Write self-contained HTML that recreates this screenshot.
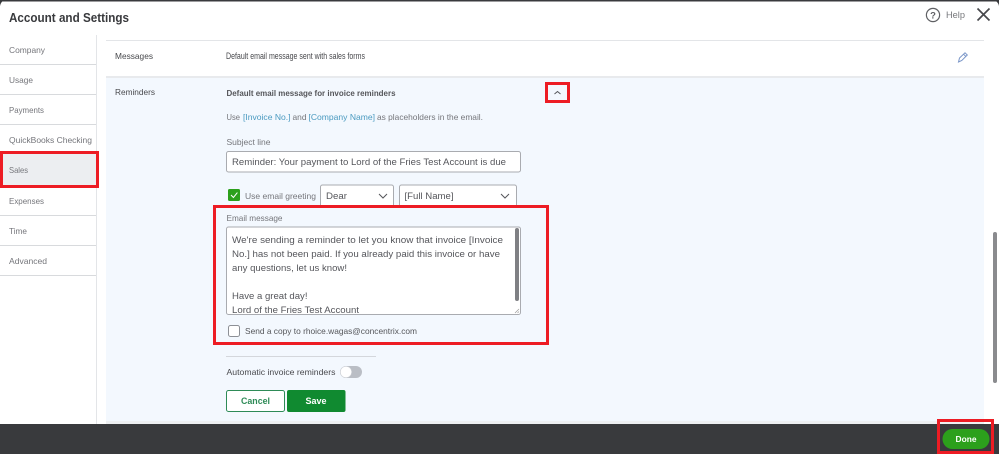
<!DOCTYPE html>
<html><head><meta charset="utf-8"><style>
html,body{margin:0;padding:0;background:#fff;width:999px;height:454px;overflow:hidden}
svg{display:block;filter:blur(.35px)}
text{font-family:"Liberation Sans",sans-serif;font-size:8.4px;fill:#75767b}
.d{fill:#48494d}
.l{fill:#4a9ac0}
.m{font-size:9.6px;fill:#55565b}
</style></head><body>
<svg width="999" height="454" viewBox="0 0 999 454" xmlns="http://www.w3.org/2000/svg">
<rect width="999" height="454" fill="#fff"/>
<rect width="999" height="1.5" fill="#393a3d"/>
<path d="M0 0H5Q1 1 0 6Z" fill="#393a3d"/>
<path d="M999 0H993Q998 1 999 6Z" fill="#393a3d"/>
<text x="9" y="22" textLength="120" lengthAdjust="spacingAndGlyphs" style="font-size:12.5px;font-weight:bold;fill:#393a3d">Account and Settings</text>

<!-- sidebar -->
<rect x="96" y="35" width="1" height="389" fill="#e3e5e8"/>
<rect x="0" y="152" width="96" height="34" fill="#eceef1"/>
<g fill="#d8dadd">
<rect y="64" width="96" height="1"/><rect y="94" width="96" height="1"/><rect y="124" width="96" height="1"/><rect y="215" width="96" height="1"/><rect y="245" width="96" height="1"/><rect y="275" width="96" height="1"/>
</g>
<text x="9" y="53" textLength="36" lengthAdjust="spacingAndGlyphs">Company</text>
<text x="9" y="83" textLength="24" lengthAdjust="spacingAndGlyphs">Usage</text>
<text x="9" y="113" textLength="35" lengthAdjust="spacingAndGlyphs">Payments</text>
<text x="9" y="143" textLength="83" lengthAdjust="spacingAndGlyphs">QuickBooks Checking</text>
<text x="9" y="173" textLength="19" lengthAdjust="spacingAndGlyphs">Sales</text>
<text x="9" y="204" textLength="35" lengthAdjust="spacingAndGlyphs">Expenses</text>
<text x="9" y="234" textLength="18" lengthAdjust="spacingAndGlyphs">Time</text>
<text x="9" y="264" textLength="38" lengthAdjust="spacingAndGlyphs">Advanced</text>

<!-- content -->
<rect x="106" y="40" width="878" height="1" fill="#e3e5e8"/>
<rect x="106" y="76" width="878" height="2" fill="#e8eaed"/>
<rect x="106" y="78" width="878" height="343" fill="#f3f8fe"/>
<rect x="106" y="421" width="878" height="3" fill="#eef0f2"/>
<text x="115" y="59" textLength="38" lengthAdjust="spacingAndGlyphs" class="d">Messages</text>
<text x="226" y="59" textLength="139" lengthAdjust="spacingAndGlyphs" style="font-size:8.8px" class="d">Default email message sent with sales forms</text>
<text x="115" y="95" textLength="40" lengthAdjust="spacingAndGlyphs" class="d">Reminders</text>
<text x="226.5" y="96" textLength="169" lengthAdjust="spacingAndGlyphs" style="font-weight:bold;fill:#55565a">Default email message for invoice reminders</text>
<text x="226.5" y="120" textLength="13.5" lengthAdjust="spacingAndGlyphs">Use</text>
<text x="243" y="120" textLength="47.5" lengthAdjust="spacingAndGlyphs" class="l">[Invoice No.]</text>
<text x="292.5" y="120" textLength="14" lengthAdjust="spacingAndGlyphs">and</text>
<text x="308.5" y="120" textLength="66.5" lengthAdjust="spacingAndGlyphs" class="l">[Company Name]</text>
<text x="377" y="120" textLength="106" lengthAdjust="spacingAndGlyphs">as placeholders in the email.</text>
<!-- pencil -->
<g fill="none" stroke="#7a96c8" stroke-width="1"><path d="M958.5 62L959.5 58L965 52.8L967.3 55L961.8 60.5Z"/><path d="M963.6 54.3L965.8 56.4"/></g>
<!-- help -->
<circle cx="933" cy="15" r="6.6" fill="none" stroke="#5f6064" stroke-width="1.2"/>
<text x="933" y="18.5" text-anchor="middle" style="font-size:9.5px;font-weight:bold;fill:#5f6064">?</text>
<text x="946" y="18" textLength="19" lengthAdjust="spacingAndGlyphs" style="font-size:9.5px;fill:#77787c">Help</text>
<path d="M977.5 8.5L989.5 20.5M989.5 8.5L977.5 20.5" stroke="#47484c" stroke-width="1.7" fill="none"/>

<!-- chevron -->
<path d="M554.5 94L557.5 91.5L560.5 94" fill="none" stroke="#55565a" stroke-width="1"/>
<rect x="546.5" y="83.5" width="22" height="18" fill="none" stroke="#ed1c24" stroke-width="3"/>

<!-- subject -->
<text x="226.5" y="145" textLength="44" lengthAdjust="spacingAndGlyphs">Subject line</text>
<rect x="226.5" y="151.5" width="294" height="20.5" rx="2" fill="#fff" stroke="#a9abb0"/>
<text x="232" y="165" textLength="274" lengthAdjust="spacingAndGlyphs" class="m">Reminder: Your payment to Lord of the Fries Test Account is due</text>

<!-- greeting -->
<rect x="228" y="189" width="12" height="12" rx="1.5" fill="#2ca01c"/>
<path d="M231 195L233.4 197.5L237.4 192.6" fill="none" stroke="#fff" stroke-width="1"/>
<text x="245" y="199" textLength="71" lengthAdjust="spacingAndGlyphs">Use email greeting</text>
<rect x="320.5" y="185" width="73" height="24" rx="2" fill="#fff" stroke="#a9abb0"/>
<text x="326" y="199" textLength="21" lengthAdjust="spacingAndGlyphs" class="m">Dear</text>
<path d="M379 194L383 198L387 194" fill="none" stroke="#55565a" stroke-width="1"/>
<rect x="399.5" y="185" width="117" height="24" rx="2" fill="#fff" stroke="#a9abb0"/>
<text x="404.5" y="199" textLength="49" lengthAdjust="spacingAndGlyphs" class="m">[Full Name]</text>
<path d="M501 194L505 198L509 194" fill="none" stroke="#55565a" stroke-width="1"/>

<!-- red box background repaint -->
<rect x="214" y="206" width="334" height="138" fill="#f3f8fe"/>
<text x="226.5" y="221" textLength="56" lengthAdjust="spacingAndGlyphs">Email message</text>
<rect x="226.5" y="227" width="294" height="87.5" rx="2" fill="#fff" stroke="#a9abb0"/>
<text x="232" y="243" textLength="271" lengthAdjust="spacingAndGlyphs" class="m">We're sending a reminder to let you know that invoice [Invoice</text>
<text x="232" y="257" textLength="268" lengthAdjust="spacingAndGlyphs" class="m">No.] has not been paid. If you already paid this invoice or have</text>
<text x="232" y="271" textLength="115" lengthAdjust="spacingAndGlyphs" class="m">any questions, let us know!</text>
<text x="232" y="299" textLength="75.5" lengthAdjust="spacingAndGlyphs" class="m">Have a great day!</text>
<text x="232" y="313" textLength="127" lengthAdjust="spacingAndGlyphs" class="m">Lord of the Fries Test Account</text>
<rect x="515" y="228" width="4" height="73" rx="2" fill="#7f8084"/>
<path d="M515 313L519 309M517.5 313L519 311.5" stroke="#999" stroke-width=".7"/>
<rect x="228.5" y="325.5" width="11" height="11" rx="2" fill="#fff" stroke="#8d9096"/>
<text x="245" y="334" textLength="172" lengthAdjust="spacingAndGlyphs" style="fill:#55565a">Send a copy to rhoice.wagas@concentrix.com</text>
<rect x="214.5" y="206.5" width="333" height="137" fill="none" stroke="#ed1c24" stroke-width="3"/>

<!-- bottom controls -->
<rect x="226" y="356" width="150" height="1" fill="#d4d7dc"/>
<text x="226.5" y="375" textLength="109" lengthAdjust="spacingAndGlyphs" class="d">Automatic invoice reminders</text>
<rect x="340" y="366" width="22" height="12" rx="6" fill="#babec5"/>
<circle cx="346" cy="372" r="5.6" fill="#fff" stroke="#d4d7dc" stroke-width=".5"/>
<rect x="226.5" y="390.5" width="58" height="21" rx="2" fill="#fff" stroke="#2e8b57"/>
<text x="241" y="404" textLength="29" lengthAdjust="spacingAndGlyphs" style="font-size:9px;font-weight:bold;fill:#2e8b57">Cancel</text>
<rect x="287" y="390" width="58.5" height="22" rx="2" fill="#108a30"/>
<text x="305.5" y="404" textLength="21" lengthAdjust="spacingAndGlyphs" style="font-size:9px;font-weight:bold;fill:#fff">Save</text>

<!-- scrollbar -->
<rect x="993" y="232" width="4" height="151" rx="2" fill="#8a8b8e"/>

<!-- footer -->
<rect x="0" y="424" width="999" height="30" fill="#393a3d"/>
<rect x="942.5" y="429" width="47" height="20" rx="10" fill="#2ca01c"/>
<text x="955.5" y="442" textLength="21" lengthAdjust="spacingAndGlyphs" style="font-size:8.5px;font-weight:bold;fill:#fff">Done</text>
<rect x="938.5" y="420.5" width="54" height="32" fill="none" stroke="#ed1c24" stroke-width="3"/>

<!-- Sales highlight -->
<rect x="1.5" y="152.5" width="96" height="34" fill="none" stroke="#ed1c24" stroke-width="3"/>
</svg>
</body></html>
